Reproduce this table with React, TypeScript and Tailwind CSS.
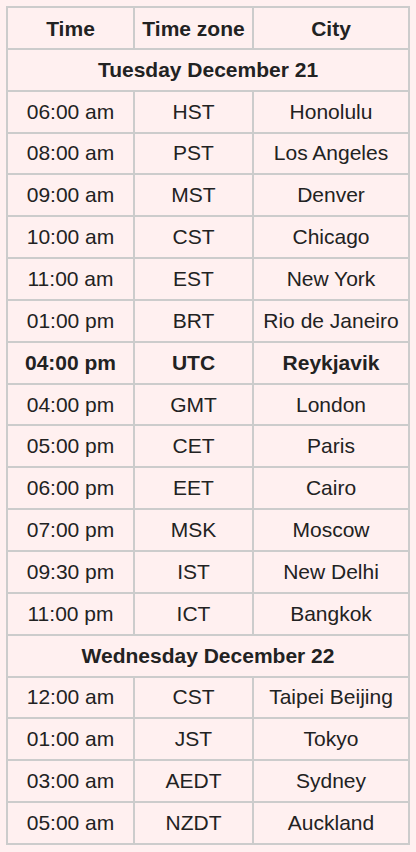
import React from 'react';

type Row = { time: string; zone: string; city: string; bold?: boolean };

const tuesday: Row[] = [
    { time: '06:00 am', zone: 'HST', city: 'Honolulu' },
    { time: '08:00 am', zone: 'PST', city: 'Los Angeles' },
    { time: '09:00 am', zone: 'MST', city: 'Denver' },
    { time: '10:00 am', zone: 'CST', city: 'Chicago' },
    { time: '11:00 am', zone: 'EST', city: 'New York' },
    { time: '01:00 pm', zone: 'BRT', city: 'Rio de Janeiro' },
    { time: '04:00 pm', zone: 'UTC', city: 'Reykjavik', bold: true },
    { time: '04:00 pm', zone: 'GMT', city: 'London' },
    { time: '05:00 pm', zone: 'CET', city: 'Paris' },
    { time: '06:00 pm', zone: 'EET', city: 'Cairo' },
    { time: '07:00 pm', zone: 'MSK', city: 'Moscow' },
    { time: '09:30 pm', zone: 'IST', city: 'New Delhi' },
    { time: '11:00 pm', zone: 'ICT', city: 'Bangkok' },
];

const wednesday: Row[] = [
    { time: '12:00 am', zone: 'CST', city: 'Taipei Beijing' },
    { time: '01:00 am', zone: 'JST', city: 'Tokyo' },
    { time: '03:00 am', zone: 'AEDT', city: 'Sydney' },
    { time: '05:00 am', zone: 'NZDT', city: 'Auckland' },
];

const cell = 'border-2 border-[#cccccc] h-[41.85px] p-0 text-center align-middle';

const DayRows: React.FC<{ title: string; rows: Row[] }> = ({ title, rows }) => (
    <>
        <tr>
            <td colSpan={3} className={`${cell} font-bold`}>{title}</td>
        </tr>
        {rows.map((r, i) => (
            <tr key={i} className={r.bold ? 'font-bold' : ''}>
                <td className={cell}>{r.time}</td>
                <td className={cell}>{r.zone}</td>
                <td className={cell}>{r.city}</td>
            </tr>
        ))}
    </>
);

export default function App() {
    return (
        <div className="min-h-[852px] bg-[#fff0f0] p-[6px] font-['Liberation_Sans',Arial,sans-serif] text-[21px] leading-[24px] text-[#222222]">
            <table className="w-[402px] border-collapse table-fixed">
                <colgroup>
                    <col className="w-[127px]" />
                    <col className="w-[119px]" />
                    <col className="w-[156px]" />
                </colgroup>
                <thead>
                    <tr className="font-bold">
                        <th className={`${cell} pt-[2px]`}>Time</th>
                        <th className={`${cell} pt-[2px]`}>Time zone</th>
                        <th className={`${cell} pt-[2px]`}>City</th>
                    </tr>
                </thead>
                <tbody>
                    <DayRows title="Tuesday December 21" rows={tuesday} />
                    <DayRows title="Wednesday December 22" rows={wednesday} />
                </tbody>
            </table>
        </div>
    );
}
